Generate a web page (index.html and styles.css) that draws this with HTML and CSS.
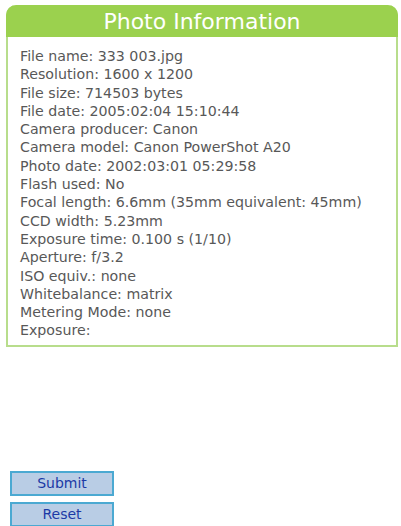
FILE: index.html
```html
<!DOCTYPE html>
<html lang="en">
<head>
  <meta charset="UTF-8">
  <title>Photo Information</title>
  <link rel="stylesheet" href="styles.css">
</head>
<body>
  <div class="panel">
    <div class="panel-title">Photo Information</div>
    <ul class="info-list">
      <li>File name: 333 003.jpg</li>
      <li>Resolution: 1600 x 1200</li>
      <li>File size: 714503 bytes</li>
      <li>File date: 2005:02:04 15:10:44</li>
      <li>Camera producer: Canon</li>
      <li>Camera model: Canon PowerShot A20</li>
      <li>Photo date: 2002:03:01 05:29:58</li>
      <li>Flash used: No</li>
      <li>Focal length: 6.6mm (35mm equivalent: 45mm)</li>
      <li>CCD width: 5.23mm</li>
      <li>Exposure time: 0.100 s (1/10)</li>
      <li>Aperture: f/3.2</li>
      <li>ISO equiv.: none</li>
      <li>Whitebalance: matrix</li>
      <li>Metering Mode: none</li>
      <li>Exposure:</li>
    </ul>
  </div>
  <form class="actions">
    <button type="button" class="btn">Submit</button>
    <button type="reset" class="btn">Reset</button>
  </form>
</body>
</html>
```

FILE: styles.css
```css
body {
  margin: 0;
  padding: 5px 3px 0 6px;
  background: #fff;
  font-family: "DejaVu Sans", sans-serif;
  color: #585858;
}
.panel {
  width: 388px;
  border: 2px solid #b8dd8c;
  border-top: none;
  border-radius: 10px 10px 0 0;
}
.panel-title {
  background: #9bd14e;
  color: #fff;
  font-size: 22px;
  height: 32px;
  line-height: 33px;
  text-align: center;
  border-radius: 10px 10px 0 0;
  margin: 0 -2px;
}
.info-list {
  list-style: none;
  margin: 0;
  padding: 10px 12px 5px 12px;
  font-size: 14.2px;
  line-height: 18.3px;
}
.actions {
  display: flex;
  flex-direction: column;
  gap: 6px;
  margin: 124px 0 0 4px;
}
.btn {
  width: 104px;
  height: 25px;
  background: #b9cde5;
  border: 2px solid #4ba9d2;
  color: #1c3aa6;
  font-family: "DejaVu Sans", sans-serif;
  font-size: 14px;
  padding: 0;
}
```
